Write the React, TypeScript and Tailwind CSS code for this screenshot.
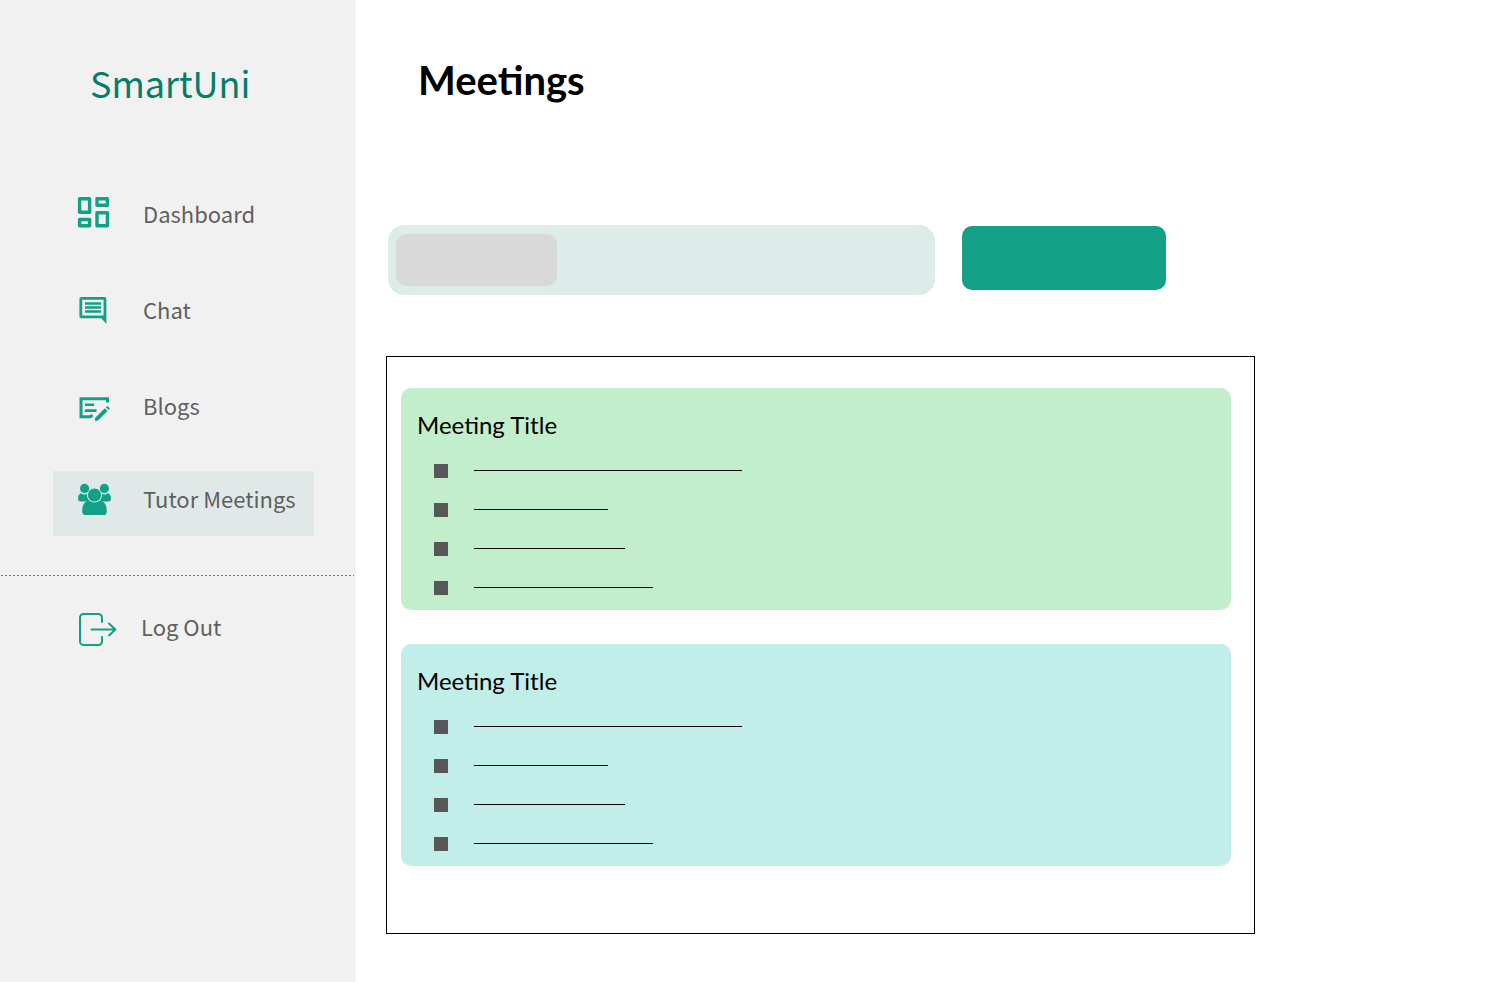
import React from "react";

function DashboardIcon() {
  return (
    <svg width="40" height="40" viewBox="0 0 40 40" fill="none" stroke="#12a186" strokeWidth="3.4" strokeLinejoin="round" aria-hidden="true">
      <rect x="2.6" y="2.7" width="10" height="13.6" />
      <rect x="20" y="2.7" width="10.4" height="6.6" />
      <rect x="2.6" y="23.5" width="10" height="6.2" />
      <rect x="20" y="16.7" width="10.4" height="13" />
    </svg>
  );
}

function ChatIcon() {
  return (
    <svg width="40" height="40" viewBox="0 0 40 40" aria-hidden="true">
      <path fillRule="evenodd" fill="#12a186" d="M4.4 5H27.4a2 2 0 0 1 2 2V31.8L24.2 26.3H4.4a2 2 0 0 1-2-2V7a2 2 0 0 1 2-2ZM5.2 7.8V23.5H26.6V7.8Z" />
      <path d="M8 11.5H24M8 15.5H24M8 19.5H24" stroke="#12a186" strokeWidth="2.6" />
    </svg>
  );
}

function BlogIcon() {
  return (
    <svg width="40" height="40" viewBox="0 0 40 40" aria-hidden="true">
      <path d="M30.5 14.5V10.8H4V28.8H13.5L15.5 27" fill="none" stroke="#12a186" strokeWidth="3" />
      <path d="M8 16.7H17M8 22.6H19.5" stroke="#12a186" strokeWidth="2.6" />
      <path d="M18 30 27.8 20.2 30.6 23 20.8 32.8H18ZM28.8 19.2 29.6 18.4a1 1 0 0 1 1.4 0L32.4 19.8a1 1 0 0 1 0 1.4L31.6 22Z" fill="#12a186" />
    </svg>
  );
}

function TutorIcon() {
  return (
    <svg width="40" height="40" viewBox="0 1 40 40" fill="#12a186" aria-hidden="true">
      <circle cx="7.6" cy="8.4" r="4.6" />
      <circle cx="27.4" cy="8.4" r="4.6" />
      <path d="M4 13.2Q7.6 15.6 10.2 13.4Q9.4 17.6 12.3 20.6L9 21.6H3Q1 21 1 18.6 1 14.4 4 13.2Z" />
      <path d="M31 13.2Q27.4 15.6 24.8 13.4Q25.6 17.6 22.7 20.6L26 21.6H32Q34 21 34 18.6 34 14.4 31 13.2Z" />
      <circle cx="17.5" cy="15" r="6.6" />
      <path d="M11.8 20.6Q17.5 24.4 23.2 20.6C28 21.6 29.8 25.5 29.8 31.4Q29.6 35 26.4 35H8.8Q5.4 35 5.2 31.4C5.2 25.5 7 21.6 11.8 20.6Z" />
    </svg>
  );
}

function LogOutIcon() {
  return (
    <svg width="40" height="40" viewBox="0 -2 40 40" fill="none" stroke="#12a186" strokeWidth="2" strokeLinecap="round" strokeLinejoin="round" aria-hidden="true">
      <path d="M25 12V7.5A3.5 3.5 0 0 0 21.5 4H6.5A3.5 3.5 0 0 0 3 7.5V31.5A3.5 3.5 0 0 0 6.5 35H21.5A3.5 3.5 0 0 0 25 31.5V27" />
      <path d="M14.5 19.5H38M32 13.5L38.4 19.5L32 25.5" />
    </svg>
  );
}

const links = [
  { label: "Dashboard", Icon: DashboardIcon, active: false },
  { label: "Chat", Icon: ChatIcon, active: false },
  { label: "Blogs", Icon: BlogIcon, active: false },
  { label: "Tutor Meetings", Icon: TutorIcon, active: true },
];

const meetings = [
  { id: 1, color: "bg-[#c2eecb]" },
  { id: 2, color: "bg-[#c2eee9]" },
];

const lineWidths = ["w-[268px]", "w-[134px]", "w-[151px]", "w-[179px]"];

function Sidebar() {
  return (
    <aside className="w-[356px] shrink-0 bg-[#f1f1f1] font-['Noto_Sans_CJK_SC',sans-serif] text-[22px] text-[#5f5f5f]">
      <p className="pt-[54px] pl-[90px] text-4xl leading-14 text-[#057d68]">SmartUni</p>
      <nav className="mt-[73px] flex flex-col gap-[31px] pr-[42px] pl-[53px]">
        {links.map(({ label, Icon, active }) => (
          <a
            key={label}
            href="#"
            aria-current={active ? "page" : undefined}
            className={`flex h-[65px] items-center gap-[26px] pl-6 ${active ? "bg-[#e0e9e7] pb-1.5" : ""}`}
          >
            <Icon />
            <span className="pb-1 whitespace-nowrap">{label}</span>
          </a>
        ))}
      </nav>
      <div className="mt-[39px] mr-0.5 ml-px h-px bg-[repeating-linear-gradient(90deg,#12a186_0_2px,transparent_2px_4px)]" />
      <a href="#" className="mt-5 flex h-16 items-center gap-6 pl-[77px]">
        <LogOutIcon />
        <span className="pb-1">Log Out</span>
      </a>
    </aside>
  );
}

function MeetingCard({ color }: { color: string }) {
  return (
    <article className={`rounded-[10px] px-4 pt-[21px] pb-[15px] ${color}`}>
      <h2 className="text-2xl leading-8">Meeting Title</h2>
      <ul className="mt-[23px] flex flex-col gap-[25px] pl-[17px]">
        {lineWidths.map((width) => (
          <li key={width} className="flex items-center gap-[26px]">
            <span className="size-3.5 bg-[#575757]" />
            <span className={`h-0.5 border-t border-black ${width}`} />
          </li>
        ))}
      </ul>
    </article>
  );
}

export default function App() {
  return (
    <div className="flex min-h-screen bg-white font-[Lato,sans-serif] text-black">
      <Sidebar />
      <main className="min-w-0 flex-1 px-[30px] pt-[55px] pb-12">
        <h1 className="pl-8 text-[40px] leading-[50px] font-bold">Meetings</h1>
        <div className="mt-[120px] flex max-w-[780px] items-start gap-[27px] pl-0.5">
          <div className="h-[70px] flex-1 rounded-2xl bg-[#deece9] px-2 py-[9px]">
            <button type="button" aria-label="Filter" className="block h-[52px] w-[161px] rounded-[10px] bg-[#d9d9d9]" />
          </div>
          <button type="button" aria-label="New meeting" className="mt-px h-16 w-[204px] rounded-[10px] bg-[#12a186]" />
        </div>
        <section className="mt-[61px] flex max-w-[869px] flex-col gap-[34px] border border-black pt-[31px] pr-[23px] pb-[67px] pl-3.5">
          {meetings.map(({ id, color }) => (
            <MeetingCard key={id} color={color} />
          ))}
        </section>
      </main>
    </div>
  );
}
